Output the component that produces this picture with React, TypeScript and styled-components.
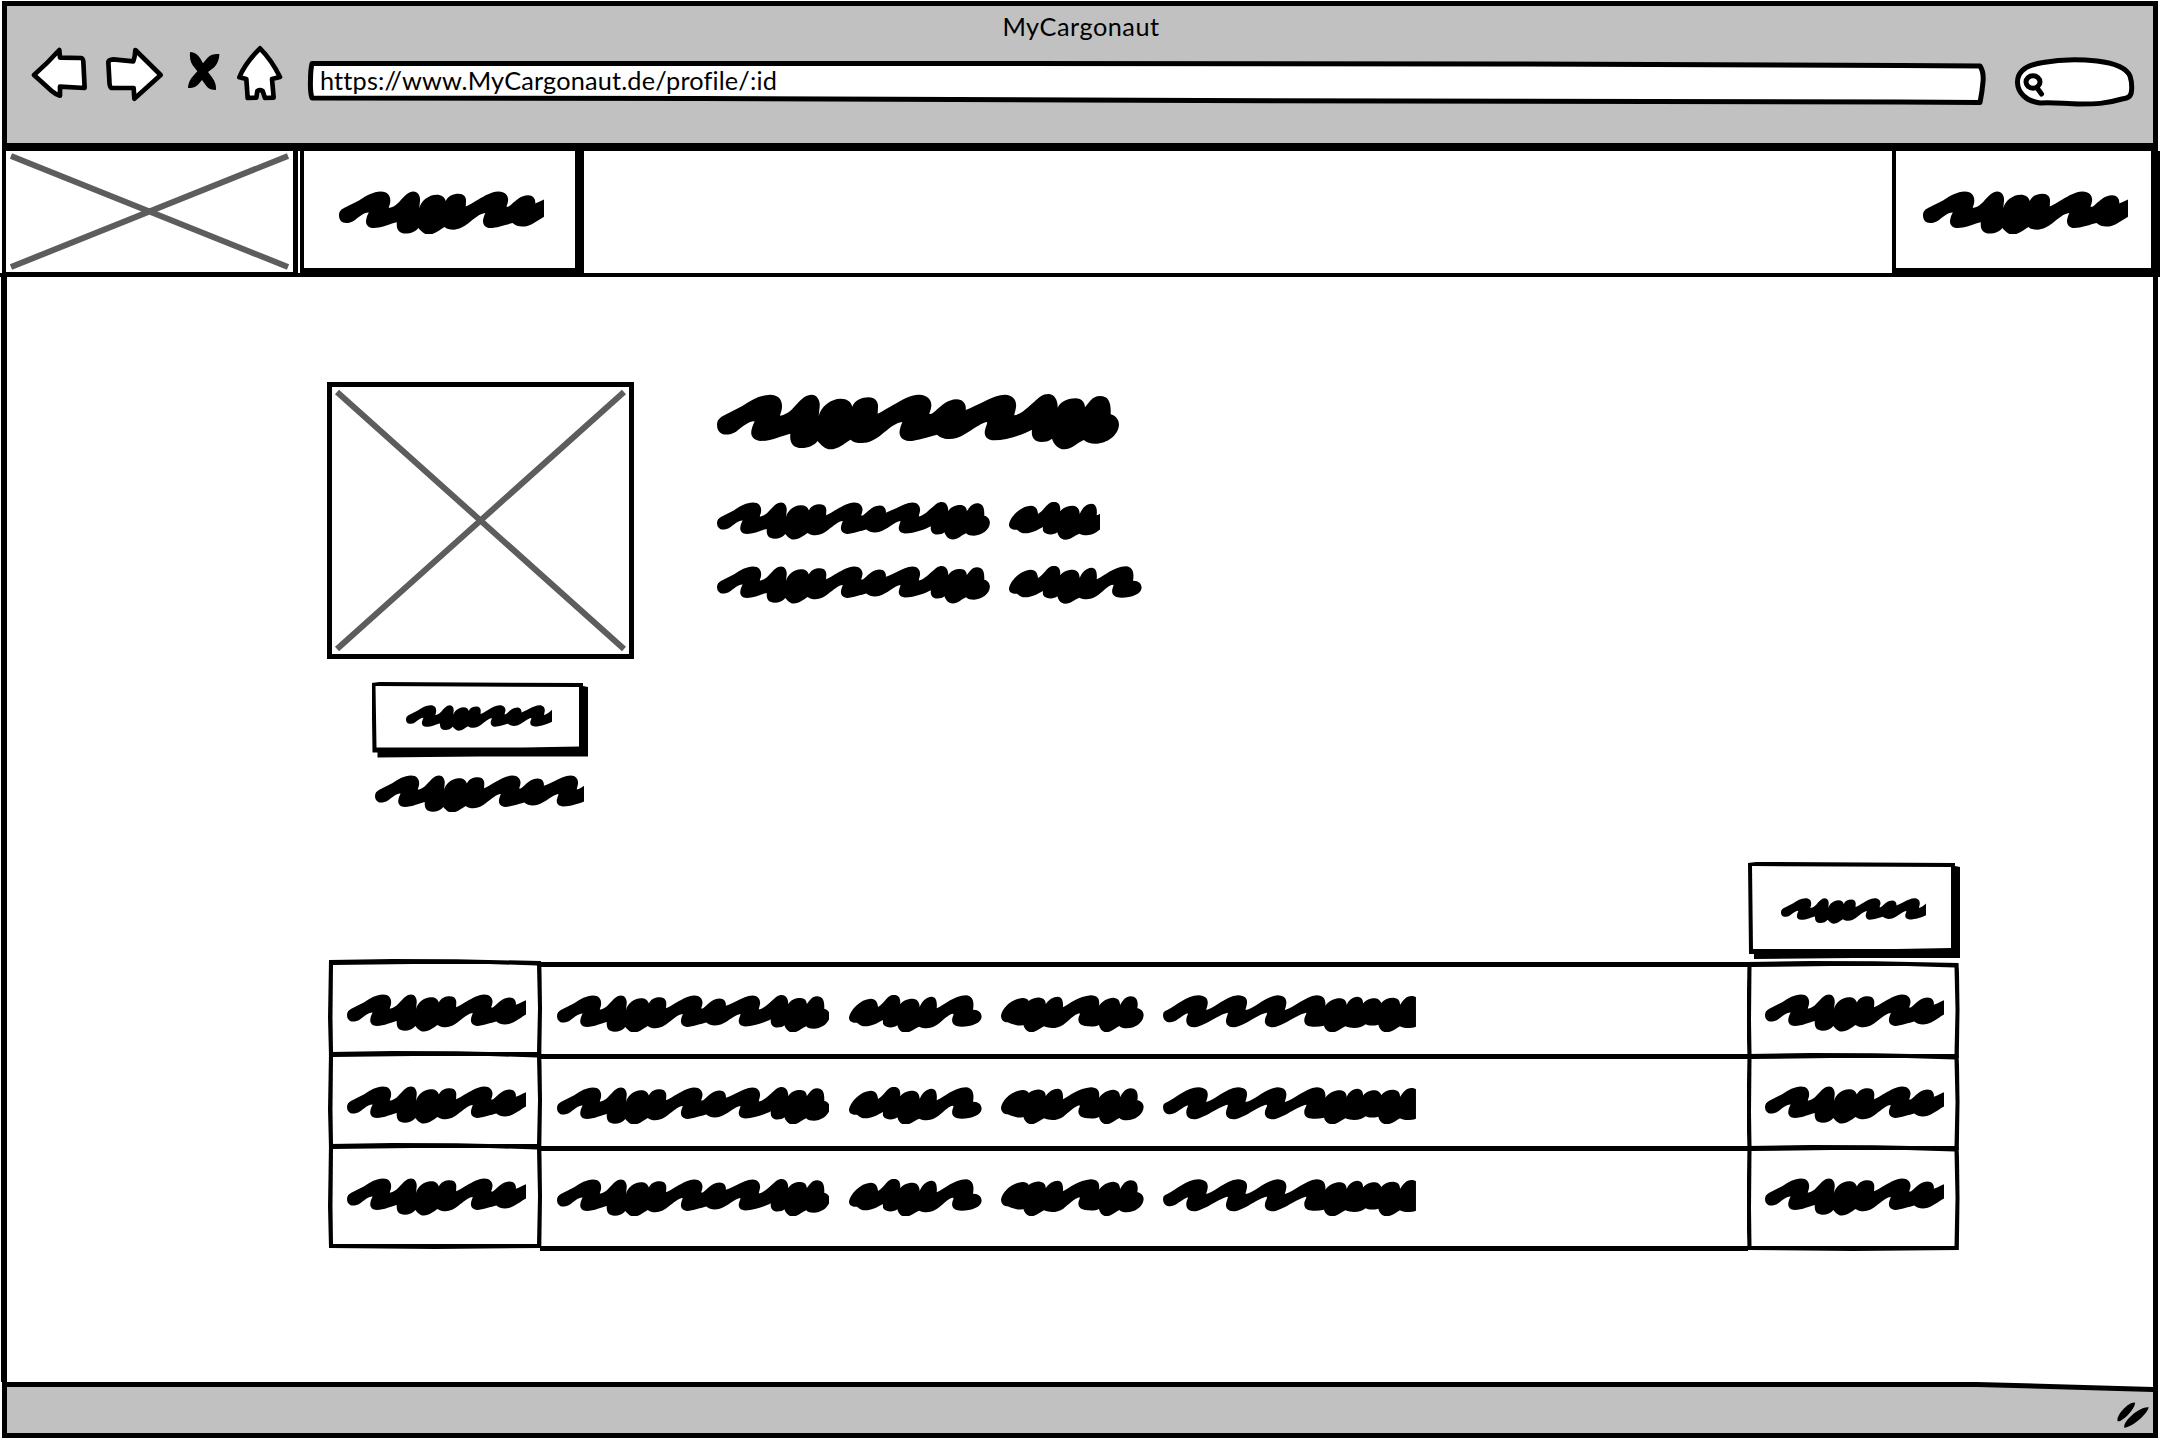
import React from "react";
import styled, { createGlobalStyle } from "styled-components";

const INK = "#000";
const CHROME = "#c1c1c1";

const GlobalStyle = createGlobalStyle`
  * { box-sizing: border-box; }
  body { margin: 0; background: #fff; color: ${INK}; font-family: Lato, "Open Sans", sans-serif; }
  svg { display: block; flex: none; }
`;

const Window = styled.div`
  width: 2160px;
  height: 1440px;
  padding-bottom: 2px;
  display: flex;
  flex-direction: column;
  overflow: hidden;
  background: #fff;
`;

/* ---------- browser chrome ---------- */

const Chrome = styled.header`
  height: 150px;
  margin: 1px 2px 0;
  flex: none;
  border: 5px solid ${INK};
  border-bottom-width: 8px;
  background: ${CHROME};
`;

const Title = styled.h1`
  margin: 0;
  height: 39px;
  padding-left: 2px;
  text-align: center;
  font-size: 25.3px;
  font-weight: 400;
  line-height: 41px;
  letter-spacing: 0.5px;
`;

const Toolbar = styled.div`
  display: grid;
  grid-template-columns: 74px 82px 50px 69px 1707px 124px;
  padding-left: 24px;
  height: 60px;
`;

const Address = styled.div`
  position: relative;
  width: 1682px;
  height: 60px;
  padding-left: 14px;
`;

const AddressArt = styled.svg`
  position: absolute;
  inset: 0;
`;

const Url = styled.span`
  position: relative;
  display: block;
  font-size: 25.3px;
  line-height: 28px;
  padding-top: 21px;
  letter-spacing: 0.16px;
  white-space: nowrap;
`;

const Footer = styled.footer`
  position: relative;
  isolation: isolate;
  height: 56px;
  margin: 0 2px;
  flex: none;
  display: flex;
  justify-content: flex-end;
  padding: 20px 9px 0 0;
  background: ${INK};
  clip-path: polygon(0 0, 1975px 0, calc(100% - 5px) 5px, calc(100% - 5px) 0, 100% 0, 100% 100%, 0 100%);
  &::before {
    content: "";
    position: absolute;
    z-index: -1;
    inset: 0;
    background: ${CHROME};
    clip-path: polygon(5px 5px, 1975px 5px, calc(100% - 5px) 10px, calc(100% - 5px) calc(100% - 5px), 5px calc(100% - 5px));
  }
`;

/* ---------- hand drawn boxes ---------- */

const SketchBox = styled.div<{ $w: number; $h: number; $outer: string; $inner: string }>`
  position: relative;
  isolation: isolate;
  flex: none;
  width: ${(p) => p.$w}px;
  height: ${(p) => p.$h}px;
  background: ${INK};
  clip-path: polygon(${(p) => p.$outer});
  &::before {
    content: "";
    position: absolute;
    z-index: -1;
    inset: 0;
    background: #fff;
    clip-path: polygon(${(p) => p.$inner});
  }
`;

const ShadowButton = styled(SketchBox).attrs({
  $outer:
    "0 1px, 8px 0, calc(100% - 5px) 1px, calc(100% - 5px) 4px, 100% 5px, 100% calc(100% - 1px), 50% calc(100% - 1px), 6px 100%, 6px calc(100% - 5px), 1px calc(100% - 5px)",
  $inner:
    "4px 4px, calc(100% - 9px) 5px, calc(100% - 9px) calc(100% - 11px), 70% calc(100% - 10px), 5px calc(100% - 10px)",
})<{ $px: number; $py: number }>`
  padding: ${(p) => p.$py}px 0 0 ${(p) => p.$px}px;
`;

const NavButton = styled.div<{ $w: number; $px: number }>`
  width: ${(p) => p.$w}px;
  height: 126px;
  flex: none;
  padding: 39.6px 0 0 ${(p) => p.$px}px;
  border: solid ${INK};
  border-width: 0 9px 9px 4px;
`;

/* ---------- nav ---------- */

const Nav = styled.nav`
  height: 126px;
  flex: none;
  display: flex;
  padding-left: 2px;
  background: linear-gradient(${INK}, ${INK}) left bottom / 2158px 4px no-repeat;
`;

const Logo = styled.div`
  width: 296px;
  height: 126px;
  flex: none;
  margin-right: 2px;
  border: solid ${INK};
  border-width: 0 5px 5px 4px;
`;

const NavSpacer = styled.div`
  flex: 1;
`;

/* ---------- page ---------- */

const Page = styled.main`
  flex: 1;
  margin: 0 2px 0 1px;
  border: solid ${INK};
  border-width: 0 5px 0 6px;
  padding: 105px 193px 0 320px;
`;

const Profile = styled.section`
  display: flex;
  height: 480px;
`;

const Aside = styled.div`
  width: 307px;
  margin-right: 83px;
`;

const Picture = styled.div`
  height: 277px;
  border: 5px solid ${INK};
`;

const UploadSlot = styled.div`
  padding: 23px 0 0 44.5px;
`;

const CaptionSlot = styled.div`
  padding: 17px 0 0 47.6px;
`;

const Details = styled.div`
  display: flex;
  flex-direction: column;
  padding-top: 12.3px;
`;

const Heading = styled.div`
  margin-bottom: 52.4px;
`;

const DetailRow = styled.div`
  display: flex;
  gap: 18.6px;
  height: 64px;
`;

const Actions = styled.div`
  display: flex;
  justify-content: flex-end;
  height: 97px;
`;

const Table = styled.div`
  display: flex;
  flex-direction: column;
  margin-left: 1px;
`;

const Row = styled.div`
  display: flex;
  height: 92px;
`;

const Cell = styled(SketchBox).attrs({
  $outer:
    "1px 1px, 30% 0, 60% 0.3px, calc(100% - 1px) 2px, calc(100% - .5px) 12px, 100% 50%, calc(100% - .7px) calc(100% - 1px), 50% 100%, 1px calc(100% - 1px), 0 60%",
  $inner:
    "5px 6px, 40% 5px, 75% 5px, calc(100% - 5px) 6.5px, calc(100% - 4px) 50%, calc(100% - 5px) calc(100% - 5px), 5px calc(100% - 5px), 4.5px 60%",
})<{ $px: number; $py: number; $drop?: number }>`
  margin-top: ${(p) => p.$drop ?? 0}px;
  padding: ${(p) => p.$py}px 0 0 ${(p) => p.$px}px;
`;

const Wide = styled.div<{ $last: boolean }>`
  width: 1208px;
  margin: 3px -1.5px 0 -2px;
  height: ${(p) => (p.$last ? 105 : 97)}px;
  flex: none;
  display: flex;
  padding: 27.6px 0 0 16.5px;
  border: solid ${INK};
  border-width: 5px 0;
`;

const WordSlot = styled.div<{ $w: number }>`
  width: ${(p) => p.$w}px;
  flex: none;
`;

/* ---------- scribbled words ---------- */

type Glyph = { x: number; y: number; w: number; h: number; d: string };

const LONG: Glyph = {
  x: 51, y: 74, w: 1206, h: 166,
  d: "M51 167C51 152 58 146 70 139L127 110C155 91 180 77 210 76C237 76 247 93 246 112C246 124 241 132 240 139C262 135 272 124 283 112C298 96 312 77 334 76C352 76 361 94 359 112L356 140C362 112 392 88 422 88C442 88 453 97 457 112C465 92 485 84 506 84C526 84 535 98 534 112L533 133C549 126 565 114 581 106C606 92 630 77 656 76C683 75 696 94 694 110C693 122 688 130 688 134C696 135 700 130 706 125C726 108 742 91 770 90C790 90 800 106 797 122C815 114 830 107 845 100C870 88 892 76 915 76C940 76 951 95 948 114C947 124 943 132 943 138C965 134 985 112 1003 97C1018 84 1027 74 1045 74C1063 74 1074 92 1073 115C1083 95 1105 87 1127 87C1145 87 1155 100 1155 114C1165 103 1176 80 1200 80C1225 80 1234 98 1232 135C1245 137 1257 150 1257 166C1256 196 1222 223 1186 223C1172 223 1160 220 1152 212C1135 218 1115 240 1093 240C1075 240 1062 226 1056 208C1050 214 1038 218 1024 218C1003 217 993 204 996 181C975 193 925 212 883 213C858 212 850 197 856 178C858 170 863 163 861 158C840 160 800 197 770 206C750 212 725 210 711 196C690 201 650 215 627 215C603 214 595 197 600 179C602 170 606 162 607 158C585 160 565 180 543 197C525 211 507 221 486 221C472 221 460 219 452 211C435 220 415 240 391 240C375 240 362 226 353 215C343 228 325 236 305 236C280 236 268 222 271 193C250 197 215 215 183 215C158 214 150 198 155 180C157 170 161 163 164 156C145 155 125 175 108 187C93 197 75 197 67 194C56 189 51 180 51 167Z",
};

const SHORT: Glyph = {
  x: 927, y: 589, w: 399, h: 113,
  d: "M927 655C932 633 960 602 992 600C1008 600 1013 612 1014 625C1035 612 1040 590 1062 588C1078 589 1083 603 1080 617C1090 605 1105 600 1118 600C1132 600 1139 612 1139 625C1145 610 1158 594 1175 594C1190 595 1192 612 1190 629C1215 618 1240 592 1278 590C1300 592 1303 612 1299 633C1315 632 1325 642 1325 654C1324 673 1295 684 1265 684C1242 684 1232 674 1238 655C1240 650 1241 648 1240 645C1225 645 1205 670 1190 679C1172 690 1155 692 1138 684C1125 688 1113 702 1096 702C1082 702 1075 692 1072 680C1060 690 1035 688 1029 675C1028 670 1029 666 1029 664C1015 672 995 683 975 683C962 682 956 676 951 672C935 673 926 667 927 655Z",
};

const MEDIUM: Glyph = {
  x: 33, y: 44, w: 429, h: 113,
  d: "M33 105C38 82 65 55 98 53C108 53 114 57 116 62C125 55 138 51 150 52C162 53 168 62 167 72C175 58 190 49 203 49C217 50 220 62 219 81C240 70 265 48 303 45C325 46 330 58 327 76C338 62 352 53 370 52C384 53 391 62 390 75C398 60 408 48 422 48C440 48 446 62 442 84C455 86 461 95 461 105C459 128 435 144 410 144C400 144 392 142 388 137C375 143 364 156 349 156C337 155 330 146 327 134C315 140 300 139 285 137C268 134 263 124 266 111C268 105 270 102 269 99C255 100 235 122 220 133C200 146 180 145 162 138C150 144 138 156 123 156C110 154 103 145 100 134C85 138 72 134 53 126C40 126 33 118 33 105Z",
};

const TAIL: Glyph = {
  x: 519, y: 44, w: 759, h: 113,
  d: "M519 104C519 95 524 92 532 89C560 76 590 45 625 45C652 46 657 62 651 80C650 84 648 87 649 89C675 84 705 48 744 45C772 46 775 62 768 82C767 86 766 88 767 89C795 84 825 48 862 45C890 46 892 62 887 80C886 84 884 87 885 89C910 84 945 48 980 45C1003 46 1008 60 1006 76C1018 60 1035 54 1048 54C1062 54 1070 62 1070 74C1075 60 1088 49 1102 49C1117 50 1120 62 1119 70C1128 57 1145 53 1156 54C1165 55 1172 62 1174 68C1182 57 1195 52 1210 52C1225 53 1231 62 1230 74C1240 60 1248 47 1265 47C1271 47 1275 49 1278 51L1278 139C1262 145 1240 145 1230 138C1218 145 1205 156 1189 156C1175 155 1168 145 1165 133C1152 137 1135 137 1127 132C1115 142 1090 148 1066 138C1053 144 1043 156 1027 156C1013 155 1005 147 1002 136C985 140 965 140 953 136C940 130 941 115 947 105C949 100 950 98 949 97C925 100 875 140 848 141C825 140 820 125 828 108C831 102 832 99 830 97C805 100 760 140 730 141C708 139 704 125 711 108C713 102 714 99 713 97C690 100 640 140 612 141C590 139 585 125 591 108C593 103 594 101 593 99C575 105 560 125 541 126C528 127 519 118 519 104Z",
};

/** One scribbled word; `cut` limits how much of it is visible, in glyph units. */
function Scribble({ glyph, scale, cut }: { glyph: Glyph; scale: number; cut?: number }) {
  const w = cut ?? glyph.w;
  return (
    <svg width={w * scale} height={glyph.h * scale} viewBox={`${glyph.x} ${glyph.y} ${w} ${glyph.h}`} aria-hidden>
      <path d={glyph.d} fill={INK} />
    </svg>
  );
}

const TEXT = 0.2263;

function Cross({ w, h, x, y }: { w: number; h: number; x: number; y: number }) {
  return (
    <svg width={w} height={h} aria-hidden>
      <path d={`M${x} ${y}L${w - x} ${h - y}M${w - x} ${y}L${x} ${h - y}`} stroke="#5d5d5d" strokeWidth="6" />
    </svg>
  );
}

function ToolIcon({ x, w, d, solid }: { x: number; w: number; d: string; solid?: boolean }) {
  return (
    <svg width={w} height={60} viewBox={`${x} 45 ${w * 3} 180`} aria-hidden>
      <path d={d} fill={solid ? INK : "#fff"} stroke={INK} strokeWidth={solid ? 0 : 14} strokeLinejoin="round" />
    </svg>
  );
}

function BrowserBar() {
  return (
    <Chrome>
      <Title>MyCargonaut</Title>
      <Toolbar>
        <ToolIcon x={93} w={57} d="M102 135Q145 97 178 60L180 83L243 84Q249 85 250 95L254 174L180 170L180 197Q165 192 155 183Z" />
        <ToolIcon x={315} w={59} d="M325 96Q327 89 340 88L400 94Q405 80 406 60L482 135L403 206L401 174L334 174Q328 172 328 150Z" />
        <ToolIcon x={561} w={34} solid d="M570 66C583 67 594 74 600 84L609 100L622 84C632 73 645 71 658 72C658 90 650 106 640 114L624 126L636 142C646 155 649 168 648 180C636 180 626 177 619 168L606 150L594 164C585 172 575 174 564 174C564 160 570 147 580 137L592 124L578 106C570 94 569 80 570 66Z" />
        <ToolIcon x={711} w={47} d="M780 55Q815 90 840 141L816 147L821 203L795 204L788 183Q780 178 772 183L769 203L743 204L739 147L718 142Q735 100 780 55Z" />
        <Address>
          <AddressArt width={1682} height={60} viewBox="306 45 1682 60" aria-hidden>
            <path
              d="M312 63.5L1000 63.5L1500 64L1900 65.5L1980 66Q1984 72 1983 82Q1982 93 1980 102.5L1900 102L1200 100.5L700 98.5L312 98Q310 92 310.500 80Q310.500 70 312 63.500Z"
              fill="#fff" stroke={INK} strokeWidth="5" strokeLinejoin="round"
            />
          </AddressArt>
          <Url>https://www.MyCargonaut.de/profile/:id</Url>
        </Address>
        <svg width={124} height={64} viewBox="2013 45 124 64" fill="none" stroke={INK} strokeWidth="5" strokeLinecap="round" aria-hidden>
          <path
            d="M2040 103C2025 101 2018 92 2017.500 83C2017 72 2026 65 2043 62.500C2062 59 2078 59 2097 61C2114 63 2126 67 2130 76C2132 82 2132 86 2131.500 91C2131 97 2128 98 2122 99C2105 104 2095 104 2080 104C2065 104 2055 102 2040 103Z"
            fill="#fff"
          />
          <ellipse cx="2033" cy="82" rx="7" ry="6.200" />
          <path d="M2037.500 88.500L2041.500 94" />
        </svg>
      </Toolbar>
    </Chrome>
  );
}

function TableRow({ last }: { last: boolean }) {
  const h = last ? 106 : 98;
  return (
    <Row>
      <Cell $w={214} $h={h} $px={18.8} $py={35.200}>
        <Scribble glyph={LONG} scale={TEXT} cut={793} />
      </Cell>
      <Wide $last={last}>
        <WordSlot $w={292.500}><Scribble glyph={LONG} scale={TEXT} /></WordSlot>
        <WordSlot $w={152}><Scribble glyph={SHORT} scale={1 / 3} /></WordSlot>
        <WordSlot $w={162}><Scribble glyph={MEDIUM} scale={1 / 3} /></WordSlot>
        <WordSlot $w={253}><Scribble glyph={TAIL} scale={1 / 3} /></WordSlot>
      </Wide>
      <Cell $drop={2} $w={213} $h={h} $px={18.300} $py={33.2}>
        <Scribble glyph={LONG} scale={TEXT} cut={793} />
      </Cell>
    </Row>
  );
}

export default function App() {
  return (
    <Window>
      <GlobalStyle />
      <BrowserBar />
      <Nav>
        <Logo><Cross w={287} h={121} x={5} y={5} /></Logo>
        <NavButton $w={284} $px={34.5}><Scribble glyph={LONG} scale={0.263} cut={781} /></NavButton>
        <NavSpacer />
        <NavButton $w={268} $px={26.7}><Scribble glyph={LONG} scale={0.263} cut={781} /></NavButton>
      </Nav>
      <Page>
        <Profile>
          <Aside>
            <Picture><Cross w={297} h={267} x={5} y={5} /></Picture>
            <UploadSlot>
              <ShadowButton $w={216.500} $h={75.500} $px={34.800} $py={23.4}>
                <Scribble glyph={LONG} scale={0.1547} cut={942} />
              </ShadowButton>
            </UploadSlot>
            <CaptionSlot><Scribble glyph={LONG} scale={TEXT} cut={926} /></CaptionSlot>
          </Aside>
          <Details>
            <Heading><Scribble glyph={LONG} scale={1 / 3} /></Heading>
            <DetailRow>
              <Scribble glyph={LONG} scale={TEXT} />
              <Scribble glyph={SHORT} scale={1 / 3} cut={273} />
            </DetailRow>
            <DetailRow>
              <Scribble glyph={LONG} scale={TEXT} />
              <Scribble glyph={SHORT} scale={1 / 3} />
            </DetailRow>
          </Details>
        </Profile>
        <Actions>
          <ShadowButton $w={212} $h={97} $px={32.700} $py={36.2}>
            <Scribble glyph={LONG} scale={0.1547} cut={942} />
          </ShadowButton>
        </Actions>
        <Table>
          {[0, 1, 2].map((i) => (
            <TableRow key={i} last={i === 2} />
          ))}
        </Table>
      </Page>
      <Footer>
        <svg width={32} height={26} viewBox="651 126 96 78" aria-hidden>
          <path
            d="M653 184C647 168 685 125 705 128C706 145 670 185 653 184ZM673 203C668 184 720 138 746 142C742 165 690 205 673 203Z"
            fill={INK}
          />
        </svg>
      </Footer>
    </Window>
  );
}
